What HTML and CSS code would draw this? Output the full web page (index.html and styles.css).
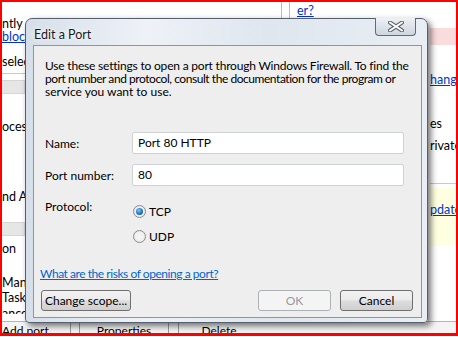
FILE: index.html
```html
<!DOCTYPE html>
<html>
<head>
    <title>Edit a Port</title>
    <meta name="viewport" content="width=device-width" />
    <link rel="stylesheet" href="styles.css">
</head>
<body>

<div class="screen">

    <!-- window behind the dialog -->
    <div class="backdrop">
        <div class="left-col">
            <div class="bg-text row-a">ntly u</div>
            <div class="bg-link row-b">blocki</div>
            <div class="bg-text row-c">select</div>
            <div class="bg-rule row-d"></div>
            <div class="bg-band row-e"></div>
            <div class="bg-text row-f">ocess</div>
            <div class="bg-text row-g">nd Ale</div>
            <div class="bg-band row-h"></div>
            <div class="bg-text row-i">on</div>
            <div class="bg-text row-j">Manag</div>
            <div class="bg-text row-k">Tasks</div>
            <div class="bg-text row-l">ance</div>
        </div>

        <div class="mid-col">
            <div class="top-strip">
                <span class="vline"></span>
                <span class="vline"></span>
                <span class="bg-link">er?</span>
            </div>
        </div>

        <div class="right-col">
            <div class="pink-band"></div>
            <div class="bg-link row-r1">hange</div>
            <div class="bg-text row-r2">es</div>
            <div class="bg-text row-r3">rivate</div>
            <div class="bg-rule row-r4"></div>
            <div class="yellow-band">
                <span class="bg-link">pdate</span>
            </div>
        </div>

        <div class="bottom-bar">
            <div class="bar-btn btn-add">Add port</div>
            <div class="bar-btn btn-props">Properties</div>
            <div class="bar-btn btn-del">Delete</div>
        </div>
    </div>

    <!-- the dialog window -->
    <div class="dialog">
        <div class="titlebar">
            <span class="title">Edit a Port</span>
            <div class="close-btn">
                <svg width="16" height="11" viewBox="0 0 16 11">
                    <path d="M2 1.5 L14 9.5 M14 1.5 L2 9.5" stroke="#5c6068" stroke-width="4" stroke-linecap="round"/>
                    <path d="M2 1.5 L14 9.5 M14 1.5 L2 9.5" stroke="#ffffff" stroke-width="2" stroke-linecap="round"/>
                </svg>
            </div>
        </div>

        <div class="client">
            <p class="intro">
                <span class="line line-1">Use these settings to open a port through Windows Firewall. To find the</span>
                <span class="line line-2">port number and protocol, consult the documentation for the program or</span>
                <span class="line">service you want to use.</span>
            </p>

            <div class="field">
                <label class="field-label">Name:</label>
                <div class="textbox">Port 80 HTTP</div>
            </div>
            <div class="field field-port">
                <label class="field-label">Port number:</label>
                <div class="textbox">80</div>
            </div>

            <div class="protocol">
                <div class="field-label proto-label">Protocol:</div>
                <div class="radios">
                    <div class="radio-row"><span class="radio checked"></span>TCP</div>
                    <div class="radio-row"><span class="radio"></span>UDP</div>
                </div>
            </div>

            <a class="risk-link">What are the risks of opening a port?</a>

            <div class="buttons">
                <div class="btn btn-scope">Change scope...</div>
                <div class="spacer"></div>
                <div class="btn btn-disabled">OK</div>
                <div class="btn">Cancel</div>
            </div>
        </div>
    </div>

</div>

</body>
</html>
```

FILE: styles.css
```css
body, html {
    margin: 0;
    padding: 0;
    background: #ffffff;
}

.screen {
    position: relative;
    width: 454px;
    height: 331px;
    border: 2px solid #ff0000;
    border-right-width: 3px;
    border-bottom-width: 3px;
    overflow: hidden;
    font-family: Lato, "Noto Sans", sans-serif;
    font-size: 12px;
    color: #000;
}

/* ---------- window behind ---------- */

.backdrop {
    display: flex;
    height: 100%;
    background: #ffffff;
}

.left-col {
    width: 23px;
    display: flex;
    flex-direction: column;
    white-space: nowrap;
    overflow: hidden;
}

.bg-text, .bg-link {
    line-height: 13px;
    height: 13px;
    font-size: 12.5px;
}

.bg-link {
    color: #0033cc;
    text-decoration: underline;
}

.row-a { margin-top: 15px; }
.row-b { margin-top: 0; }
.row-c { margin-top: 12px; }
.row-d { margin-top: 5px; }
.row-e { margin-top: 6px; height: 8px; }
.row-f { margin-top: 26px; }
.row-g { margin-top: 57px; }
.row-h { margin-top: 19px; }
.row-i { margin-top: 6px; }
.row-j { margin-top: 21px; }
.row-k { margin-top: 2px; }
.row-l { margin-top: 3px; height: 7px; overflow: hidden; }

.bg-rule {
    height: 1px;
    background: #c9c9c9;
}

.bg-band {
    height: 12px;
    width: 22px;
    background: #e6e6e6;
    border: 1px solid #d6d6d6;
    border-left: none;
}

.mid-col {
    width: 405px;
}

.top-strip {
    display: flex;
    align-items: flex-start;
    height: 16px;
    padding-left: 256px;
}

.top-strip .vline {
    width: 1px;
    height: 16px;
    background: #b8bfc8;
    margin-right: 7px;
}

.top-strip .bg-link {
    margin-top: 2px;
}

.right-col {
    flex: 1;
    display: flex;
    flex-direction: column;
    white-space: nowrap;
    overflow: hidden;
}

.pink-band {
    margin-top: 26px;
    height: 17px;
    background: #fbdcdc;
}

.row-r1 { margin-top: 28px; }
.row-r2 { margin-top: 31px; }
.row-r3 { margin-top: 9px; }
.row-r4 { margin-top: 31px; width: 100%; }

.yellow-band {
    margin-top: 4px;
    height: 58px;
    background: #ffffe1;
    padding-top: 14px;
    box-sizing: border-box;
}

.bottom-bar {
    position: absolute;
    left: 0;
    right: 0;
    top: 319px;
    height: 20px;
    display: flex;
    border-top: 1px solid #b5b5b5;
    background: #f4f4f4;
}

.bar-btn {
    height: 20px;
    line-height: 18px;
    text-align: center;
    white-space: nowrap;
}

.btn-add { width: 68px; text-align: left; margin-right: 8px; border-right: 1px solid #9a9a9a; }
.btn-props { width: 88px; margin-right: 9px; border-left: 1px solid #9a9a9a; border-right: 1px solid #9a9a9a; }
.btn-del { width: 80px; border-left: 1px solid #9a9a9a; }

/* ---------- dialog ---------- */

.dialog {
    position: absolute;
    left: 23px;
    top: 16px;
    width: 403px;
    height: 305px;
    box-sizing: border-box;
    padding: 0 5px 4px 7px;
    border: 1px solid #55606c;
    border-radius: 7px 7px 4px 4px;
    background: linear-gradient(to right, #d6dfe9, #eef2f7 30%, #dfe6ee 60%, #e9eef4);
    box-shadow: 3px 3px 6px rgba(0, 0, 0, 0.55);
    display: flex;
    flex-direction: column;
}

.titlebar {
    position: relative;
    height: 26px;
    flex-shrink: 0;
}

.title {
    display: block;
    padding: 9px 0 0 1px;
    line-height: 14px;
    font-size: 12.5px;
    color: #1a1a1a;
    text-shadow: 0 0 6px #ffffff, 0 0 3px #ffffff;
}

.close-btn {
    position: absolute;
    top: -1px;
    right: 6px;
    width: 41px;
    height: 18px;
    box-sizing: border-box;
    border: 1px solid #626a74;
    border-top: none;
    border-radius: 0 0 4px 4px;
    background: linear-gradient(#eef1f5, #dde3ea 50%, #cfd6df);
    display: flex;
    align-items: center;
    justify-content: center;
}

.client {
    flex: 1;
    border: 1px solid #8c96a2;
    background: #eeeeee;
    padding: 0 8px 0 6px;
    display: flex;
    flex-direction: column;
}

.intro {
    margin: 13px 0 0 5px;
    line-height: 13px;
    white-space: nowrap;
}

.intro .line {
    display: block;
}

.intro .line-1 {
    letter-spacing: -0.2px;
}

.intro .line-2 {
    letter-spacing: -0.45px;
}

.field {
    display: flex;
    align-items: center;
    margin-top: 34px;
}

.field-port {
    margin-top: 10px;
}

.field-label {
    width: 87px;
    padding-left: 5px;
    flex-shrink: 0;
}

.textbox {
    width: 272px;
    height: 22px;
    box-sizing: border-box;
    line-height: 20px;
    padding-left: 5px;
    background: #ffffff;
    border: 1px solid #cfd3d8;
    border-radius: 2px;
}

.protocol {
    display: flex;
    margin-top: 13px;
}

.proto-label {
    line-height: 13px;
    margin-top: 1px;
}

.radio-row {
    display: flex;
    align-items: center;
    height: 25px;
    padding-left: 1px;
}

.radio {
    width: 11px;
    height: 11px;
    border-radius: 50%;
    border: 1px solid #8a8d92;
    background: radial-gradient(circle, #f4f4f4 40%, #d9dcdf);
    margin-right: 3px;
    position: relative;
}

.radio.checked::after {
    content: "";
    position: absolute;
    left: 2px;
    top: 2px;
    width: 7px;
    height: 7px;
    border-radius: 50%;
    background: radial-gradient(circle at 40% 35%, #7ec7f5, #1c6fb8 60%, #0d4a8c);
}

.risk-link {
    margin-top: 18px;
    line-height: 13px;
    color: #0066cc;
    text-decoration: underline;
    white-space: nowrap;
    letter-spacing: -0.45px;
}

.buttons {
    display: flex;
    margin-top: 10px;
    gap: 9px;
    padding-left: 1px;
}

.spacer {
    flex: 1;
}

.btn {
    width: 73px;
    height: 21px;
    box-sizing: border-box;
    line-height: 19px;
    text-align: center;
    white-space: nowrap;
    border: 1px solid #707070;
    border-radius: 3px;
    background: linear-gradient(#f2f2f2 0%, #ebebeb 48%, #dddddd 52%, #cfcfcf 100%);
}

.btn-scope {
    width: 90px;
}

.btn-disabled {
    color: #9a9a9a;
    border-color: #adb2b5;
    background: #f4f4f4;
}
```
